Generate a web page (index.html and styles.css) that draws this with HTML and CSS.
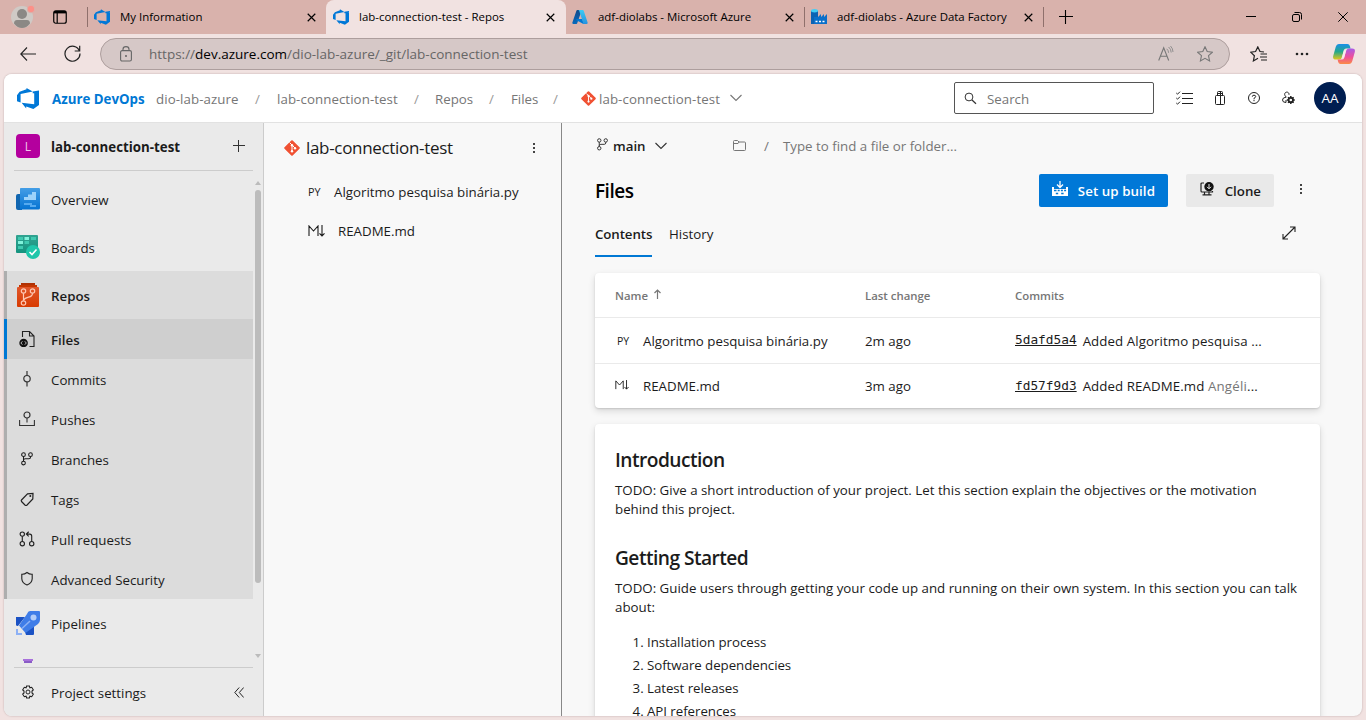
FILE: index.html
```html
<!DOCTYPE html>
<html lang="en">
<head>
<meta charset="utf-8">
<title>lab-connection-test - Repos</title>
<link rel="stylesheet" href="styles.css">
</head>
<body>
<svg width="0" height="0" class="defs" aria-hidden="true">
  <defs>
    <linearGradient id="azl" x1="0" y1="0" x2="0" y2="1"><stop offset="0" stop-color="#114a8b"/><stop offset="1" stop-color="#0669bc"/></linearGradient>
    <linearGradient id="azr" x1="0" y1="0" x2="0" y2="1"><stop offset="0" stop-color="#3ccbf4"/><stop offset="1" stop-color="#2892df"/></linearGradient>
    <linearGradient id="ov" x1="0" y1="0" x2="0" y2="1"><stop offset="0" stop-color="#449ee6"/><stop offset="1" stop-color="#0573d2"/></linearGradient>
    <linearGradient id="bd" x1="0" y1="0" x2="0" y2="1"><stop offset="0" stop-color="#31a391"/><stop offset="1" stop-color="#15947f"/></linearGradient>
    <linearGradient id="rp" x1="0" y1="0" x2="0" y2="1"><stop offset="0" stop-color="#e0572b"/><stop offset="1" stop-color="#d83b01"/></linearGradient>
    <linearGradient id="cp1" x1="0" y1="0" x2="0" y2="1"><stop offset="0" stop-color="#1a8fe8"/><stop offset=".5" stop-color="#24a88a"/><stop offset="1" stop-color="#e2c61a"/></linearGradient>
    <linearGradient id="cp2" x1="0" y1="0" x2="0" y2="1"><stop offset="0" stop-color="#a85ae8"/><stop offset=".55" stop-color="#ee4f9a"/><stop offset="1" stop-color="#fb8b45"/></linearGradient>
    <symbol id="devops" viewBox="0 0 22 21"><path fill="#0078d7" d="M0 7.3 2.6 3.8 9.5 1.2V0l6.2 3.6L3.6 6v8.5L0 13.3zM22 4v13l-5.6 4-7.2-2.5v2L4.6 14.8l12.6 1.5V4.6z M15.7 3.4 22 2.4V4.2l-6.3 1z"/></symbol>
    <symbol id="git" viewBox="0 0 16 16"><path fill="#f05133" d="M7.3.5.5 7.3a1 1 0 0 0 0 1.4l6.8 6.8a1 1 0 0 0 1.4 0l6.8-6.8a1 1 0 0 0 0-1.4L8.7.5a1 1 0 0 0-1.4 0z"/><path d="M5.600 2.600 8 5v6M8 5l3.200 3.200" stroke="#fff" stroke-width="1" fill="none"/><circle cx="8" cy="5.200" r="1.200" fill="#fff"/><circle cx="8" cy="11.200" r="1.200" fill="#fff"/><circle cx="11" cy="8.200" r="1.200" fill="#fff"/></symbol>
    <symbol id="branch" viewBox="0 0 16 16"><g fill="none" stroke="currentColor" stroke-width="1.200"><circle cx="4" cy="3" r="2.100"/><circle cx="12" cy="3" r="2.100"/><circle cx="4" cy="12.600" r="2.100"/><path d="M4 5v5.600M12 5v1q0 1.800-1.800 1.800H6Q4 7.800 4 9.400"/></g></symbol>
    <symbol id="close" viewBox="0 0 10 10"><path d="m.8.8 8.400 8.400m0-8.400L.8 9.200" stroke="currentColor" stroke-width="1.300" fill="none"/></symbol>
    <symbol id="chev" viewBox="0 0 12 8"><path d="m.5 1 5.500 5.500L11.500 1" stroke="currentColor" stroke-width="1.100" fill="none"/></symbol>
    <symbol id="mdown" viewBox="0 0 17 12"><path d="M1 11V1l4.500 5L10 1v10M14 0v11m-2.500-2.600L14 11l2.500-2.600" stroke="currentColor" fill="none" stroke-width="1.100"/></symbol>
  </defs>
</svg>

<div class="tabstrip">
  <svg class="avatar" width="24" height="24" viewBox="0 0 24 24"><circle cx="11" cy="12" r="11" fill="#cfcac6"/><circle cx="11" cy="9" r="5" fill="#8b8885"/><path d="M3 18.500q0-3.500 3-3.500h10q3 0 3 3.500-3.500 4.500-8 4.500t-8-4.500z" fill="#8b8885"/><circle cx="20" cy="4" r="3.800" fill="#fc9088" stroke="#d9b2ac"/></svg>
  <svg class="wsp" width="14" height="14" viewBox="0 0 14 14"><rect x=".75" y=".75" width="12.500" height="12.500" rx="2" fill="none" stroke="#000" stroke-width="1.200"/><path d="M1 2.200h12" stroke="#000" stroke-width="2.400"/><path d="M4.200 3v10" stroke="#000" stroke-width="1.200"/></svg>
  <i class="tsep first"></i>
  <div class="tab t1"><svg width="16" height="16"><use href="#devops"/></svg><span>My Information</span><svg class="x" width="9" height="9"><use href="#close"/></svg></div>
  <div class="tab t2 active"><svg width="16" height="16"><use href="#devops"/></svg><span>lab-connection-test - Repos</span><svg class="x" width="9" height="9"><use href="#close"/></svg></div>
  <div class="tab t3"><svg width="16" height="16" viewBox="0 0 16 16"><path d="M5.300 1h4.500L5.200 14.200a1 1 0 0 1-.8.700H1.200a1 1 0 0 1-.9-1.200L4.500 1.600A1 1 0 0 1 5.300 1z" fill="url(#azl)"/><path d="M4.500 10h6l1 4.900L4 11z" fill="#0078d4"/><path d="M6.300 1h4.500a1 1 0 0 1 .9.700l4 12a1 1 0 0 1-.9 1.200h-4.600a1 1 0 0 0 .9-1.200L7.100 1.600A1 1 0 0 0 6.300 1z" fill="url(#azr)"/></svg><span>adf-diolabs - Microsoft Azure</span><svg class="x" width="9" height="9"><use href="#close"/></svg></div>
  <i class="tsep"></i>
  <div class="tab t4"><svg width="16" height="16" viewBox="0 0 16 16"><path d="M0 2h7v13H0z" fill="#0b62b3"/><ellipse cx="3.500" cy="1.700" rx="3.500" ry="1.700" fill="#42cdf5"/><path d="M3 15V8h4l3-3v3l3-3v3l3-3v10z" fill="#0a6fca"/><path d="M4.500 12.500h2m1.500 0h2m1.500 0h2" stroke="#fff" stroke-width="1.500"/></svg><span>adf-diolabs - Azure Data Factory</span><svg class="x" width="9" height="9"><use href="#close"/></svg></div>
  <i class="tsep"></i>
  <svg class="newtab" width="14" height="14" viewBox="0 0 14 14"><path d="M6.500 0v14M0 6.500h14" stroke="#000" stroke-width="1.100"/></svg>
  <div class="wctl">
    <svg width="10" height="10"><path d="M0 4.500h10" stroke="#000"/></svg>
    <svg width="10" height="10" viewBox="0 0 10 10"><rect x=".5" y="2.500" width="7" height="7" rx="1.500" fill="none" stroke="#000"/><path d="M2.500.5H7.500q2 0 2 2v5" fill="none" stroke="#000"/></svg>
    <svg width="10" height="10" viewBox="0 0 10 10"><path d="m.3.3 9.400 9.400M9.700.3.3 9.700" stroke="#000"/></svg>
  </div>
</div>

<div class="toolbar">
  <svg class="back" width="16" height="14" viewBox="0 0 16 14"><path d="M16 7H1m6-6.500L.8 7 7 13.500" fill="none" stroke="#222" stroke-width="1.100"/></svg>
  <svg class="reload" width="17" height="17" viewBox="0 0 17 17"><path d="M15.500 6A7.500 7.500 0 1 0 16 8.500M15.700.8V6h-5" fill="none" stroke="#222" stroke-width="1.200"/></svg>
  <div class="urlbar">
    <svg width="12" height="16" viewBox="0 0 12 16"><rect x=".6" y="4.600" width="10.800" height="10.400" rx="1.500" fill="none" stroke="#666" stroke-width="1.100"/><path d="M3 4.500V3.300a3 2.700 0 0 1 6 0v1.200" fill="none" stroke="#666" stroke-width="1.100"/><circle cx="6" cy="10" r=".9" fill="#555"/></svg>
    <span class="url">https://<b>dev.azure.com</b>/dio-lab-azure/_git/lab-connection-test</span>
    <svg class="read" width="16" height="16" viewBox="0 0 16 16"><path d="m.7 14.500 5-12.700 5 12.700M2.400 10.300h6.600" fill="none" stroke="#777" stroke-width="1.100"/><path d="M8.700 2.800q1.800 1.500 1.900 4M10.600 1q2.500 2 2.600 5.500M12.500 0q2.500 2.500 2.500 6" fill="none" stroke="#888" stroke-width=".9"/></svg>
    <svg class="star" width="16" height="16" viewBox="0 0 16 16"><path d="m8 .8 2.200 4.800 5.200.6-3.900 3.500 1.100 5.200L8 12.300l-4.600 2.600 1.100-5.200L.6 6.200l5.200-.6z" fill="none" stroke="#777" stroke-width="1.100"/></svg>
  </div>
  <svg class="favs" width="17" height="16" viewBox="0 0 17 16"><path d="M14 6 10 5.500 7.800.9 5.600 5.500.7 6.200l3.700 3.500-1 5.200L8 12.200M10.500 8H17M10 11h7M11 14h6" fill="none" stroke="#222" stroke-width="1.200"/></svg>
  <svg class="more" width="14" height="4" viewBox="0 0 14 4"><g fill="#222"><circle cx="2" cy="2" r="1.300"/><circle cx="7" cy="2" r="1.300"/><circle cx="12" cy="2" r="1.300"/></g></svg>
  <svg class="copilot" width="22" height="20" viewBox="0 0 22 20"><path d="M6 0h8.500q1.800 0 2.400 2l.6 2.400H13q-1.600 0-2.100 1.700L9 13q-.6 2.500-2.800 2.500H3Q-.6 15.500.2 12L2.700 3Q3.600 0 6 0z" fill="url(#cp1)"/><path d="M16 20H7.500q-1.800 0-2.300-2l-.6-2.500H9q1.600 0 2.100-1.600L13 7q.7-2.500 2.900-2.500H19q3.600 0 2.800 3.500l-2.500 9Q18.400 20 16 20z" fill="url(#cp2)"/><path d="M10.800 6.500h2.300l-1.900 7H9z" fill="#fbe9ec"/></svg>
</div>

<div class="page">
  <header class="head">
    <svg class="logo" width="22" height="21"><use href="#devops"/></svg>
    <span class="brand">Azure DevOps</span>
    <nav class="crumbs">
      <span class="c1">dio-lab-azure</span><i class="s1">/</i><span class="c2">lab-connection-test</span><i class="s2">/</i><span class="c3">Repos</span><i class="s3">/</i><span class="c4">Files</span><i class="s4">/</i>
      <svg class="cgit" width="15" height="15"><use href="#git"/></svg><span class="c5">lab-connection-test</span>
      <svg class="cchev" width="12" height="8"><use href="#chev"/></svg>
    </nav>
    <div class="search"><svg width="13" height="13" viewBox="0 0 13 13"><circle cx="5" cy="5" r="3.900" fill="none" stroke="#333"/><path d="m8 8 4 3.800" stroke="#333" stroke-width="1.200"/></svg><span>Search</span></div>
    <div class="hicons">
      <svg width="17" height="14" viewBox="0 0 17 14"><path d="M6 2.500h11M6 7.500h11M6 12.500h11M.3 2l1.200 1.200L4 .7M.3 7l1.200 1.200L4 5.700M.3 12l1.200 1.200L4 10.700" fill="none" stroke="#222"/></svg>
      <svg width="10" height="15" viewBox="0 0 10 15"><rect x=".5" y="4.500" width="9" height="9" rx="1" fill="none" stroke="#222"/><path d="M5.500 5v8M2.500 4.500v-3q0-1 1-1h3q1 0 1 1v3M5.500.5v4M2.500 2.500h5" fill="none" stroke="#222"/></svg>
      <svg width="12" height="12" viewBox="0 0 12 12"><circle cx="6" cy="6" r="5.500" fill="none" stroke="#222"/><path d="M4.300 4.700Q4.300 3.200 6 3.200t1.700 1.400Q7.700 5.500 6 6.300v1M6 8v1.200" fill="none" stroke="#222"/></svg>
      <svg width="13" height="14" viewBox="0 0 13 14"><path d="M7 3.800A2.200 2.200 0 1 0 3 4.500q.3 1.200 1.500 1.500M4 6.200Q.5 6.500.5 9q0 2.500 3.500 2.500V9" fill="none" stroke="#222"/><circle cx="8.800" cy="9" r="2.200" fill="none" stroke="#222" stroke-width="1.800"/><path d="M8.800 5v2m0 4v2M4.800 9h2m4 0h2M6 6.200l1.400 1.400m2.800 2.800 1.400 1.400m0-5.600-1.400 1.400m-2.800 2.800L6 11.800" stroke="#222" stroke-width="1.500"/></svg>
      <div class="me">AA</div>
    </div>
  </header>

  <div class="body">
    <aside class="side">
      <div class="proj"><div class="tile">L</div><span class="pname">lab-connection-test</span><svg width="12" height="12"><path d="M5.500 0v12M0 5.500h12" stroke="#333"/></svg></div>
      <div class="scroller">
        <div class="nav">
          <a class="big"><svg width="24" height="24" viewBox="0 0 24 24"><path d="M0 9q0-2 2-2h4v16H2q-2 0-2-2z" fill="#1166b0"/><path d="M4 1.500Q4 1 5 1h18q1 0 1 1v19q0 1.500-1.500 1.500H4z" fill="url(#ov)"/><path d="M8 12V10h4V7.500h4V5h4v8H8z" fill="#9dd3fa"/><path d="M8 16h8v2H8zM14 18h6v2h-6z" fill="#55aaf0"/></svg><span>Overview</span></a>
          <a class="big"><svg width="24" height="24" viewBox="0 0 24 24"><rect y="0" width="22" height="18" rx="1" fill="url(#bd)"/><path d="M2 2h5v3H2zM15 2h5v3h-5zM8.500 6H13v3H8.500zM2 11h5v3H2z" fill="#3fc9b0"/><path d="M8.500 2H13v3H8.500zM2 6h5v3H2z" fill="#82f2db"/><circle cx="17" cy="17" r="7" fill="#1fc6aa"/><path d="m13.500 17 2.500 2.500 4.500-5" fill="none" stroke="#fff" stroke-width="1.600"/></svg><span>Boards</span></a>
          <div class="group">
            <a class="big strong"><svg width="24" height="24" viewBox="0 0 24 24"><path d="M5 0h14v3H5z" fill="#b03205"/><path d="M3 2h18v4H3z" fill="#c43601"/><rect x="1" y="4" width="22" height="20" rx="1" fill="url(#rp)"/><g fill="none" stroke="#ffc9b5" stroke-width="1.200"><circle cx="7.500" cy="8" r="2.200"/><circle cx="16.500" cy="8" r="2.200"/><circle cx="7.500" cy="20" r="2.200"/><path d="M7.500 10.200v7.600M16.500 10.200q0 3-4 4t-5 3"/></g></svg><span>Repos</span></a>
            <a class="sub sel"><svg width="16" height="16" viewBox="0 0 16 16"><path d="M3.500 6V.500H10.500l4.500 4.500v10.500H10.500M10.500.5V5H15" fill="none" stroke="#222" stroke-width="1.100"/><circle cx="4.600" cy="12" r="4.300" fill="#111"/><path d="M3.400 10.300 1.900 12l1.500 1.700M5.800 10.300 7.300 12l-1.500 1.700" fill="none" stroke="#ccc" stroke-width=".9"/></svg><span>Files</span></a>
            <a class="sub"><svg width="16" height="16" viewBox="0 0 16 16"><path d="M8 0v4.500M8 11v4.500" stroke="#333" stroke-width="1.200"/><circle cx="8" cy="7.700" r="3.200" fill="none" stroke="#333" stroke-width="1.200"/></svg><span>Commits</span></a>
            <a class="sub"><svg width="16" height="16" viewBox="0 0 16 16"><path d="M.6 9v5.500h14.800V9M8 7v4.500" fill="none" stroke="#333" stroke-width="1.100"/><circle cx="8" cy="4" r="3" fill="none" stroke="#333" stroke-width="1.200"/></svg><span>Pushes</span></a>
            <a class="sub"><svg class="br" width="16" height="16"><use href="#branch"/></svg><span>Branches</span></a>
            <a class="sub"><svg width="16" height="16" viewBox="0 0 16 16"><path d="m2.500 9 6-6.200 5.500-.3-.2 5.500-6 6.200q-.8.600-1.600 0L2.500 10.500q-.6-.8 0-1.500z" fill="none" stroke="#222" stroke-width="1.200"/><circle cx="11.300" cy="5" r="1" fill="#222"/></svg><span>Tags</span></a>
            <a class="sub"><svg width="17" height="16" viewBox="0 0 17 16"><g fill="none" stroke="#222" stroke-width="1.200"><circle cx="3.500" cy="2.800" r="2.300"/><circle cx="3.500" cy="13" r="2.300"/><circle cx="13.500" cy="13" r="2.300"/><path d="M3.500 5v5.700M13.500 10.700V5q0-2.200-2-2.200H8M10.300.3 7.800 2.800l2.500 2.500"/></g></svg><span>Pull requests</span></a>
            <a class="sub"><svg width="16" height="16" viewBox="0 0 16 16"><path d="M8 1.500q2.500 2 5.200 1.800v4.400Q13 12 8 14 3 12 2.800 7.700V3.300Q5.500 3.500 8 1.500z" fill="none" stroke="#222" stroke-width="1.100"/></svg><span>Advanced Security</span></a>
          </div>
          <a class="big"><svg width="24" height="24" viewBox="0 0 24 24"><path d="M0 6h9L2 15q-2 0-2-1zM9 21l9-7v9q0 1-1 1h-7z" fill="#1b52c4"/><path d="M14 0h9q1 0 1 1v8q0 2-2 4L9.500 22 3 14.500 11 3q1-3 3-3z" fill="#3f7de8"/><circle cx="17.500" cy="6.500" r="3" fill="#b3cdf8"/><path d="m6 17.500 8-7.500" stroke="#8fb3f4" stroke-width="1.500"/><path d="M0 18h2v4h4v2H0z" fill="#8db1f5"/></svg><span>Pipelines</span></a>
          <a class="big cut"><svg width="24" height="24" viewBox="0 0 24 24"><path d="M7 0h10v2H7z" fill="#a871dc"/><path d="M8 2h8v3H8z" fill="#8a5cc6"/></svg></a>
        </div>
        <div class="bar"><svg width="6" height="4"><path d="m0 4 3-4 3 4z" fill="#bbb"/></svg><i></i><svg class="dn" width="6" height="4"><path d="m0 0 3 4 3-4z" fill="#bbb"/></svg></div>
      </div>
      <div class="settings"><svg width="14" height="14" viewBox="0 0 14 14"><path d="M5.600 1h2.800l.5 1.800 1.800-.5 1.600 2.500L11 6v2l1.300 1.200-1.600 2.500-1.800-.5-.5 1.800H5.600l-.5-1.800-1.800.5-1.600-2.500L3 8V6L1.700 4.800l1.600-2.500 1.800.5z" fill="none" stroke="#222" stroke-width="1.100"/><circle cx="7" cy="7" r="2" fill="none" stroke="#222"/></svg><span>Project settings</span><svg class="coll" width="10" height="11" viewBox="0 0 10 11"><path d="M5.200.5.8 5.500l4.400 5M9.700.5 5.300 5.500l4.400 5" fill="none" stroke="#222"/></svg></div>
    </aside>

    <section class="tree">
      <div class="thead"><svg width="16" height="16"><use href="#git"/></svg><h2>lab-connection-test</h2><div class="kebab"><i></i><i></i><i></i></div></div>
      <div class="file"><em>PY</em><span>Algoritmo pesquisa binária.py</span></div>
      <div class="file md"><svg width="17" height="12"><use href="#mdown"/></svg><span>README.md</span></div>
    </section>

    <main class="main">
      <div class="path"><svg width="13" height="13"><use href="#branch"/></svg><b>main</b><svg class="pch" width="12" height="8"><use href="#chev"/></svg><svg class="fold" width="13" height="11" viewBox="0 0 13 11"><path d="M.5 9.500V1.500Q.5.500 1.500.500h3L6 2h5.500q1 0 1 1v6.500q0 1-1 1h-10q-1 0-1-1zM.5 3.500H5L6 2" fill="none" stroke="#777"/></svg><i>/</i><span>Type to find a file or folder...</span></div>
      <div class="title"><h1>Files</h1>
        <div class="btn primary"><svg width="16" height="16" viewBox="0 0 16 16"><path d="M8 0v6M5 3.500l3 3 3-3" fill="none" stroke="#fff" stroke-width="1.300"/><path d="M0 6h2v2h12V6h2v9H0z" fill="#fff"/><path d="M2 9.500h2.500m1.200 0h2m1.200 0h2m1.200 0h2M3.800 12.500h2.400m3 0h2.400" stroke="#0078d4" stroke-width="1.300"/></svg><span>Set up build</span></div>
        <div class="btn"><svg width="14" height="14" viewBox="0 0 14 14"><path d="M4 1H2Q1 1 1 2v7q0 1 1 1h10.500V9M4.500 10v2.500M9 10v2.500M2.500 12.800h9" fill="none" stroke="#222" stroke-width="1.200"/><circle cx="9" cy="4.700" r="4.700" fill="#111"/><path d="M9 2v4.500M7 4.800l2 2 2-2" fill="none" stroke="#eee"/></svg><span>Clone</span></div>
        <div class="kebab"><i></i><i></i><i></i></div>
      </div>
      <div class="tabs"><span class="on">Contents</span><span>History</span><svg width="14" height="14" viewBox="0 0 14 14"><path d="M1.500 12.500l11-11M8 1h5v5M1 8v5h5" fill="none" stroke="#222" stroke-width="1.100"/></svg></div>
      <div class="card table">
        <div class="row hd"><span class="n">Name <svg width="7" height="10" viewBox="0 0 7 10"><path d="M3.500 10V1M.5 4l3-3 3 3" fill="none" stroke="#777" stroke-width="1.200"/></svg></span><span class="l">Last change</span><span>Commits</span></div>
        <div class="row"><div class="n"><em>PY</em><span>Algoritmo pesquisa binária.py</span></div><span class="l">2m ago</span><div class="cm"><code>5dafd5a4</code><span>Added Algoritmo pesquisa ...</span></div></div>
        <div class="row"><div class="n"><svg width="14" height="10" viewBox="0 0 17 12"><use href="#mdown"/></svg><span>README.md</span></div><span class="l">3m ago</span><div class="cm"><code>fd57f9d3</code><span>Added README.md <small>Angéli</small>...</span></div></div>
      </div>
      <article class="card readme">
        <h3>Introduction</h3>
        <p>TODO: Give a short introduction of your project. Let this section explain the objectives or the motivation<br>behind this project.</p>
        <h3>Getting Started</h3>
        <p>TODO: Guide users through getting your code up and running on their own system. In this section you can talk<br>about:</p>
        <ol><li>Installation process</li><li>Software dependencies</li><li>Latest releases</li><li>API references</li></ol>
      </article>
    </main>
  </div>
</div>
</body>
</html>
```
FILE: styles.css
```css
* { box-sizing: border-box; }
html, body { height: 100%; }
body { margin: 0; width: 1366px; height: 720px; overflow: hidden; background: #f1e2e1; font-family: "Open Sans", "Noto Sans", sans-serif; font-size: 13.3px; color: #1b1b1b; display: flex; flex-direction: column; }
svg { flex: none; display: block; }
span, h1, h2, h3, b, em { white-space: nowrap; }
em, i { font-style: normal; }
.defs { position: absolute; }

/* Browser chrome */
.tabstrip { height: 34px; flex: none; background: #d9b2ac; display: flex; align-items: center; font-size: 11.45px; color: #000; }
.avatar { margin: -1px 0 0 11px; }
.wsp { margin-left: 18px; }
.tsep { width: 1px; height: 20px; background: #8f706c; }
.tsep.first { margin-left: 20px; }
.tab { height: 34px; display: flex; align-items: center; padding-left: 7px; }
.tab span { margin-left: 10px; padding-bottom: 2px; }
.tab .x { margin-left: auto; margin-right: 10px; }
.t1 { width: 238px; padding-left: 6px; }
.active { width: 240px; background: #f1e2e1; border-radius: 8px 8px 0 0; }
.active .x { margin-right: 11px; }
.t3 { width: 238px; padding-left: 6px; }
.t4 { width: 238px; padding-left: 6px; }
.newtab { margin-left: 15px; }
.wctl { margin-left: auto; margin-right: 18px; display: flex; gap: 36px; }

.toolbar { height: 39px; flex: none; display: flex; align-items: center; }
.back { margin-left: 20px; }
.reload { margin-left: 28px; }
.urlbar { margin: 1px 0 0 19px; width: 1130px; height: 32px; border: 1px solid #ad9e9d; border-radius: 16px; background: #d6c8c7; display: flex; align-items: center; padding-left: 19px; }
.url { margin-left: 17px; color: #666; font-size: 13.5px; }
.url b { font-weight: 400; color: #000; }
.read { margin-left: auto; }
.star { margin-left: 23px; margin-right: 16px; }
.favs { margin-left: 20px; }
.more { margin-left: 28px; }
.copilot { margin-left: 24px; }

/* Page shell */
.page { margin: 1px 4px 4px; flex: 1; min-height: 0; background: #f8f8f8; border-radius: 8px; overflow: hidden; display: flex; flex-direction: column; box-shadow: 0 0 2px #b9a5a4; }
.head { height: 49px; flex: none; background: #fff; border-bottom: 1px solid #e2e2e2; display: flex; align-items: center; padding-left: 13px; }
.brand { margin-left: 13px; width: 104px; color: #0078d4; font-weight: 700; padding-top: 2px; }
.crumbs { display: flex; align-items: center; color: #767676; }
.crumbs span, .crumbs i { padding-top: 2px; }
.crumbs i { color: #999; }
.c1 { width: 99px; } .s1 { width: 22px; }
.c2 { width: 137px; } .s2 { width: 21px; }
.c3 { width: 54px; } .s3 { width: 22px; }
.c4 { width: 42px; } .s4 { width: 28px; }
.cgit { margin-right: 3px; }
.c5 { width: 131px; letter-spacing: .08px; }
.c1, .c2 { letter-spacing: .07px; }
.search { margin-left: auto; width: 200px; height: 32px; border: 1px solid #555; border-radius: 2px; display: flex; align-items: center; padding-left: 9px; color: #767676; }
.search span { margin-left: 10px; padding-top: 2px; }
.hicons { display: flex; align-items: center; width: 208px; padding-left: 22px; }
.hicons svg + svg { margin-left: 22px; }
.hicons svg:nth-child(3) { margin-left: 23px; }
.me { margin-left: 19px; width: 32px; height: 32px; border-radius: 50%; background: #001e51; color: #fff; font-size: 13.5px; display: flex; align-items: center; justify-content: center; }
.body { flex: 1; min-height: 0; display: flex; }

/* Project sidebar */
.side { width: 260px; flex: none; background: #eaeaea; border-right: 1px solid #ccc; display: flex; flex-direction: column; }
.proj { height: 48px; flex: none; margin: 0 10px; border-bottom: 1px solid #ccc; display: flex; align-items: center; padding-left: 2px; }
.tile { width: 24px; height: 24px; margin-top: -1px; border-radius: 4px; background: #b4009e; color: #f0c8ea; font-size: 12px; display: flex; align-items: center; justify-content: center; }
.pname { font-weight: 700; margin-left: 11px; }
.proj svg { margin: -1px 8px 0 auto; }
.scroller { flex: 1; min-height: 0; display: flex; padding-top: 4px; margin-bottom: 4px; }
.nav { width: 249px; overflow: hidden; }
.nav a { display: flex; align-items: center; }
.nav span { padding-top: 2px; }
.big { height: 48px; padding-left: 12px; }
.big span { margin-left: 11px; }
.nav .cut { padding-top: 12px; align-items: flex-start; }
.group { background: #dcdcdc; box-shadow: inset 3px 0 #aeaeae; }
.strong, .sel { font-weight: 600; }
.sub { height: 40px; padding-left: 15px; }
.sub svg { width: 16px; margin-right: 16px; }
.sub .br { height: 14px; }
.sel { background: #cfcfcf; box-shadow: inset 3px 0 #0078d4; }
.bar { width: 10px; display: flex; flex-direction: column; align-items: center; padding-top: 6px; }
.bar i { width: 6px; height: 393px; border-radius: 3px; background: #bcbcbc; margin-top: 5px; }
.dn { margin-top: auto; margin-bottom: 5px; }
.settings { height: 49px; flex: none; margin: 0 10px; border-top: 1px solid #ccc; display: flex; align-items: center; padding-left: 7px; }
.settings span { margin-left: 16px; padding-top: 2px; }
.coll { margin-left: auto; margin-right: 9px; }

/* Repository tree */
.tree { width: 298px; flex: none; border-right: 1px solid #888; padding: 3px 0 0 20px; }
.thead { height: 43px; display: flex; align-items: center; }
.thead h2 { margin: 0 0 0 6px; font-size: 17px; font-weight: 400; letter-spacing: -.32px; }
.kebab { display: flex; flex-direction: column; gap: 2px; }
.kebab i { width: 2px; height: 2px; background: #444; }
.thead .kebab { margin-left: auto; margin-right: 26px; }
.file { height: 39px; display: flex; align-items: center; padding-left: 24px; margin-top: 3px; }
.file em { font-size: 10.8px; width: 26px; }
.md { margin-top: 0; }
.md svg { margin-right: 13px; }

/* File browser */
.main { flex: 1; padding: 0 42px 0 33px; display: flex; flex-direction: column; min-width: 0; }
.path { height: 45px; flex: none; display: flex; align-items: center; color: #767676; padding-left: 1px; }
.path > svg:first-child { color: #333; margin-top: -3px; }
.path b { font-weight: 600; color: #1b1b1b; margin-left: 4px; width: 42px; }
.pch { color: #333; }
.fold { margin-left: 66px; }
.path i { margin-left: 18px; width: 19px; }
.title { height: 44px; flex: none; display: flex; align-items: center; }
.title h1 { margin: 2px auto 0 0; font-size: 19px; font-weight: 600; letter-spacing: -.5px; color: #000; }
.btn { height: 33px; border-radius: 2px; background: #e9e9e9; font-weight: 600; display: flex; align-items: center; padding: 0 13px 0 14px; margin-left: 18px; width: 88px; }
.btn svg { margin-top: -2px; }
.btn span { margin-left: auto; padding-top: 1px; }
.primary { width: 129px; background: #0078d7; color: #fff; padding-left: 13px; }
.primary span { letter-spacing: .08px; }
.title .kebab { margin: -2px 18px 0 26px; }
.tabs { height: 45px; flex: none; display: flex; align-items: flex-start; }
.tabs span { height: 45px; padding-top: 13px; }
.tabs .on { width: 57px; margin-right: 17px; font-weight: 600; letter-spacing: -.1px; border-bottom: 2px solid #0078d4; }
.tabs svg { margin: 14px 24px 0 auto; }
.card { background: #fff; border-radius: 4px; box-shadow: 0 3px 7px rgba(0,0,0,.13), 0 1px 2px rgba(0,0,0,.13); flex: none; }
.table { margin-top: 16px; height: 135px; }
.row { height: 45px; display: flex; align-items: center; border-top: 1px solid #eaeaea; padding-left: 20px; }
.row + .row { height: 46px; }
.row + .row + .row { height: 45px; }
.hd { height: 44px; border: 0; color: #767676; font-size: 11.4px; font-weight: 600; }
.n { width: 250px; display: flex; align-items: center; }
.hd svg { margin: -3px 0 0 6px; }
.n em { width: 28px; padding-left: 2px; font-size: 10.5px; }
.n svg { margin-top: -3px; }
.n svg + span { margin-left: 14px; }
.l { width: 150px; }
.cm { display: flex; align-items: center; letter-spacing: .07px; }
.cm code { font: 12.8px "DejaVu Sans Mono", monospace; letter-spacing: 0; text-decoration: underline; margin: -2px 6px 0 0; }
.cm small { font-size: inherit; color: #767676; letter-spacing: .2px; }
.readme { margin-top: 16px; height: 340px; padding: 22px 20px; }
.readme h3 { font-size: 19.2px; line-height: 28px; margin: 0; font-weight: 600; letter-spacing: -.55px; }
.readme p { margin: 7px 0 25px; line-height: 19px; }
.readme ol { margin: -11px 0 0; padding-left: 32px; line-height: 23px; letter-spacing: -.05px; }
```
